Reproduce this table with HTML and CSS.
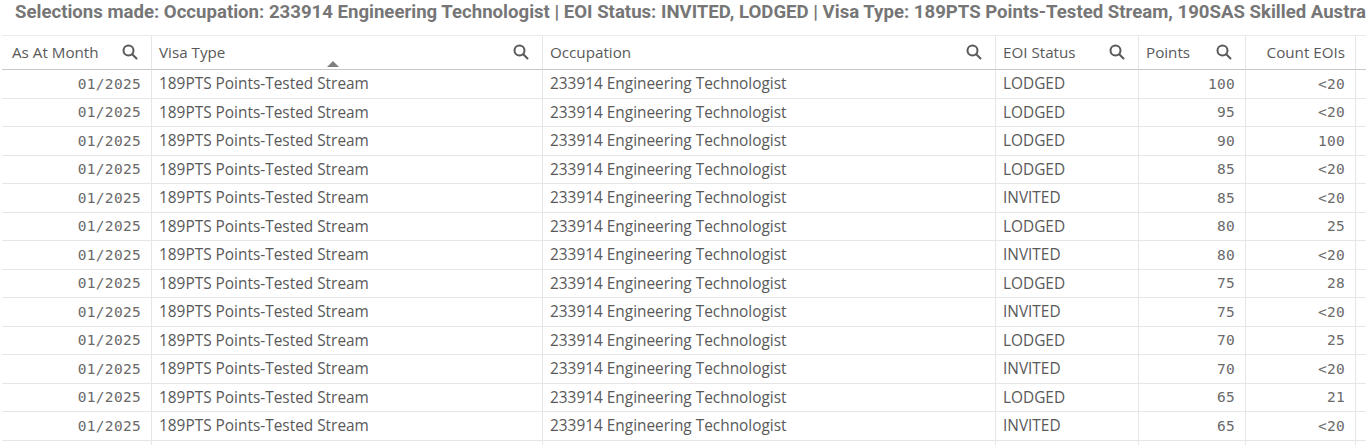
FILE: index.html
```html
<!DOCTYPE html>
<html lang="en">
<head>
    <meta charset="UTF-8">
    <title>EOI Table</title>
    <link rel="stylesheet" href="styles.css">
</head>
<body>

<div class="selections">Selections made: Occupation: 233914 Engineering Technologist | EOI Status: INVITED, LODGED | Visa Type: 189PTS Points-Tested Stream, 190SAS Skilled Australian Sponsored, 491SNR State or Territory Nominated</div>

<div class="grid" id="eoiGrid">
    <div class="th"><span>As At Month</span><svg class="search" viewBox="0 0 16 16"><circle cx="6.5" cy="6.5" r="5"/><line x1="10.2" y1="10.2" x2="14.5" y2="14.5"/></svg></div>
    <div class="th sorted"><span>Visa Type</span><svg class="search" viewBox="0 0 16 16"><circle cx="6.5" cy="6.5" r="5"/><line x1="10.2" y1="10.2" x2="14.5" y2="14.5"/></svg><i class="sort"></i></div>
    <div class="th"><span>Occupation</span><svg class="search" viewBox="0 0 16 16"><circle cx="6.5" cy="6.5" r="5"/><line x1="10.2" y1="10.2" x2="14.5" y2="14.5"/></svg></div>
    <div class="th"><span>EOI Status</span><svg class="search" viewBox="0 0 16 16"><circle cx="6.5" cy="6.5" r="5"/><line x1="10.2" y1="10.2" x2="14.5" y2="14.5"/></svg></div>
    <div class="th"><span>Points</span><svg class="search" viewBox="0 0 16 16"><circle cx="6.5" cy="6.5" r="5"/><line x1="10.2" y1="10.2" x2="14.5" y2="14.5"/></svg></div>
    <div class="th num"><span>Count EOIs</span></div>
    <div class="th last"></div>
</div>

<script>
    const rows = [
        ["LODGED", 100, "<20"],
        ["LODGED", 95, "<20"],
        ["LODGED", 90, "100"],
        ["LODGED", 85, "<20"],
        ["INVITED", 85, "<20"],
        ["LODGED", 80, "25"],
        ["INVITED", 80, "<20"],
        ["LODGED", 75, "28"],
        ["INVITED", 75, "<20"],
        ["LODGED", 70, "25"],
        ["INVITED", 70, "<20"],
        ["LODGED", 65, "21"],
        ["INVITED", 65, "<20"],
        ["LODGED", 60, "<20"]
    ];

    const grid = document.getElementById("eoiGrid");

    function cell(text, cls) {
        const div = document.createElement("div");
        div.className = "td" + (cls ? " " + cls : "");
        div.textContent = text;
        grid.appendChild(div);
    }

    rows.forEach(([status, points, count]) => {
        cell("01/2025", "num mono");
        cell("189PTS Points-Tested Stream");
        cell("233914 Engineering Technologist");
        cell(status);
        cell(points, "num mono");
        cell(count, "num mono");
        cell("", "last");
    });
</script>

</body>
</html>
```

FILE: styles.css
```css
body {
    margin: 0;
    background: #fff;
    font-family: 'Open Sans', sans-serif;
    color: #595959;
    overflow: hidden;
}
.selections {
    height: 35px;
    padding: 0 0 0 15px;
    line-height: 25px;
    font-family: Roboto, sans-serif;
    font-weight: bold;
    font-size: 18.6px;
    color: #767676;
    white-space: nowrap;
    overflow: hidden;
}
.grid {
    display: grid;
    grid-template-columns: 150px 391px 453px 143px 107px 110px 1fr;
    grid-template-rows: 34px;
    grid-auto-rows: 28.5px;
    margin-left: 2px;
    border-top: 1px solid #ebebeb;
}
.th, .td {
    box-sizing: border-box;
    display: flex;
    align-items: center;
    padding: 0 7px;
    border-right: 1px solid #e6e6e6;
    border-bottom: 1px solid #e6e6e6;
    font-size: 15.4px;
    white-space: nowrap;
    overflow: hidden;
}
.th {
    position: relative;
    justify-content: space-between;
    border-bottom-color: #c8c8c8;
    padding-right: 13px;
    padding-bottom: 2px;
    font-size: 15.2px;
}
.th:first-child, .td:nth-child(7n+1) {
    padding-left: 10px;
}
.th.num {
    justify-content: flex-end;
    padding-right: 10px;
}
.td.num {
    justify-content: flex-end;
    padding-right: 10px;
}
.td.mono {
    font-family: 'DejaVu Sans Mono', monospace;
    font-size: 14.5px;
    letter-spacing: 0.3px;
    color: #6a6a6a;
}
.th.last, .td.last {
    border-right: none;
}
.search {
    width: 16px;
    height: 16px;
    fill: none;
    stroke: #595959;
    stroke-width: 2;
    stroke-linecap: round;
}
.sort {
    position: absolute;
    left: 175px;
    bottom: 2px;
    width: 0;
    height: 0;
    border-left: 6px solid transparent;
    border-right: 6px solid transparent;
    border-bottom: 6px solid #808080;
}
```
